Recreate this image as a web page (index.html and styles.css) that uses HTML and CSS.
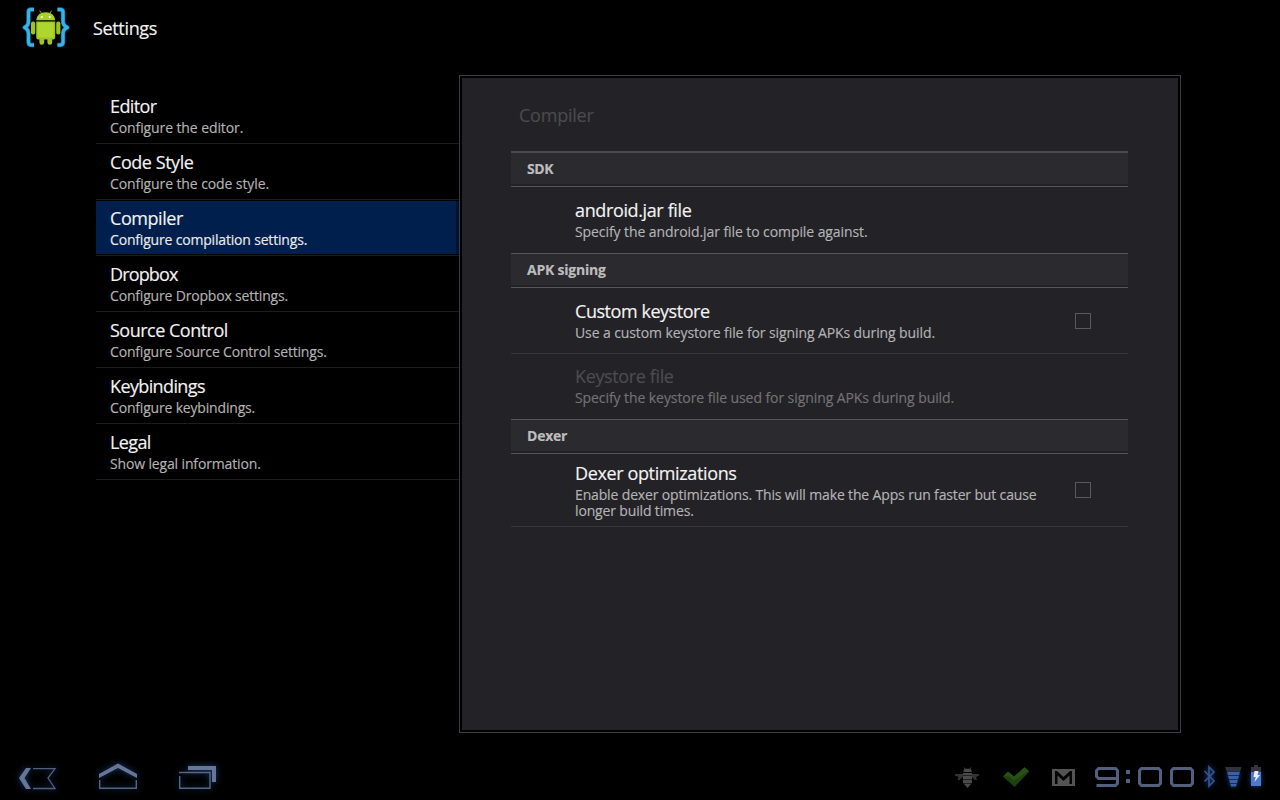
FILE: index.html
```html
<!DOCTYPE html>
<html lang="en">
<head>
<meta charset="utf-8">
<title>Settings</title>
<link rel="stylesheet" href="styles.css">
</head>
<body>
<div class="screen">
  <header class="action-bar">
    <svg class="app-icon" width="50" height="42" viewBox="0 0 50 42">
      <g fill="none" stroke="#1b6f9b" stroke-width="4.4" stroke-linejoin="round">
        <path d="M13 3.500H10Q7.500 3.500 7.500 6V15Q7.500 20 3.500 21.500Q7.500 23 7.500 28V36Q7.500 39 10.500 39H13"/>
        <path d="M36.500 3.500H39Q42 3.500 42 6V15Q42 20 46.500 21.500Q42 23 42 28V36Q42 39 39 39H36.500"/>
      </g>
      <g fill="none" stroke="#33b5ea" stroke-width="3" stroke-linejoin="round">
        <path d="M13 3.500H10Q7.500 3.500 7.500 6V15Q7.500 20 3.500 21.500Q7.500 23 7.500 28V36Q7.500 39 10.500 39H13"/>
        <path d="M36.500 3.500H39Q42 3.500 42 6V15Q42 20 46.500 21.500Q42 23 42 28V36Q42 39 39 39H36.500"/>
      </g>
      <g transform="translate(-.8 0)">
        <path d="M19.500 4.500L22 8.500M31.500 4.500L29 8.500" stroke="#86a51f" stroke-width="1"/>
        <path fill="#a9d02a" d="M16 14.300Q17 6.500 25.500 6.300Q34 6.500 35 14.300Z"/>
        <path fill="#9dc327" d="M16 15.600H35V31.500Q35 33.500 33 33.500H32V36.500Q32 38.800 29.700 38.800Q27.200 38.800 27.200 36.500V33.500H24V36.500Q24 38.800 21.500 38.800Q19.200 38.800 19.200 36.500V33.500H18Q16 33.500 16 31.500Z"/>
        <rect x="10.800" y="15.500" width="4.200" height="13" rx="2" fill="#9dc327"/>
        <rect x="36" y="15.500" width="4.200" height="13" rx="2" fill="#9dc327"/>
        <rect x="17.500" y="16.500" width="16" height="15" fill="#aed62c"/>
        <circle cx="21.600" cy="11" r="1.100" fill="#fff"/><circle cx="29.500" cy="11" r="1.100" fill="#fff"/>
      </g>
    </svg>
    <h1 class="title">Settings</h1>
  </header>

  <main class="content">
    <nav class="headers">
      <a class="header-item"><span class="title tight">Editor</span><span class="summary loose">Configure the editor.</span></a>
      <a class="header-item"><span class="title">Code Style</span><span class="summary loose">Configure the code style.</span></a>
      <a class="header-item selected"><span class="title">Compiler</span><span class="summary">Configure compilation settings.</span></a>
      <a class="header-item"><span class="title tighter">Dropbox</span><span class="summary">Configure Dropbox settings.</span></a>
      <a class="header-item"><span class="title snug">Source Control</span><span class="summary">Configure Source Control settings.</span></a>
      <a class="header-item"><span class="title tight">Keybindings</span><span class="summary">Configure keybindings.</span></a>
      <a class="header-item"><span class="title tight">Legal</span><span class="summary medium">Show legal information.</span></a>
    </nav>

    <section class="panel">
      <div class="panel-body">
        <h2 class="title crumb">Compiler</h2>
        <h3 class="group first">SDK</h3>
        <div class="pref">
          <div class="pref-text"><span class="title wide">android.jar file</span><span class="summary looser">Specify the android.jar file to compile against.</span></div>
        </div>
        <h3 class="group">APK signing</h3>
        <div class="pref ruled">
          <div class="pref-text"><span class="title">Custom keystore</span><span class="summary loose">Use a custom keystore file for signing APKs during build.</span></div>
          <span class="checkbox"></span>
        </div>
        <div class="pref disabled">
          <div class="pref-text"><span class="title wide">Keystore file</span><span class="summary looser">Specify the keystore file used for signing APKs during build.</span></div>
        </div>
        <h3 class="group">Dexer</h3>
        <div class="pref ruled tall">
          <div class="pref-text"><span class="title wide">Dexer optimizations</span><span class="summary medium">Enable dexer optimizations. This will make the Apps run faster but cause longer build times.</span></div>
          <span class="checkbox"></span>
        </div>
      </div>
    </section>
  </main>

  <footer class="system-bar">
    <svg class="nav-keys" width="240" height="46" viewBox="0 0 240 46">
      <g class="key-glow">
        <path fill="#687696" d="M26 14H31L24.500 24L31 35H26L19 24Z"/>
        <path fill="none" stroke="#525f7d" stroke-width="1.300" d="M33 14.600H55L48 24L55 34.500H33"/>
        <path fill="#687696" d="M99 20L118 9.500L137 20V24L118 14L99 24Z"/>
        <path fill="none" stroke="#56637f" stroke-width="1.400" d="M99.700 26V34.300H136.300V26"/>
        <path fill="#687696" d="M188 12H216V28H212V16H188Z"/>
        <path fill="none" stroke="#58667f" stroke-width="1.400" d="M179 18.500H210V34.300H179.700V22"/>
      </g>
    </svg>
    <svg class="status" width="330" height="46" viewBox="950 754 330 46">
      <g fill="#4a4a4a">
        <path d="M963.500 772V770L965 768.800H970L971.500 770V772Z"/>
        <path d="M964 767.500l1.500 2M971 767.500l-1.500 2" stroke="#4a4a4a" stroke-width=".9"/>
        <path fill="#343434" d="M955 774H963V776.500L959.500 780H957.500L958.500 777L955 775.500ZM979 774H971.500V776.500L975 780H977L976 777L979 775.500Z"/>
        <path d="M963 773H972V775H963ZM963 776H972V779H963ZM963 780H972V783H963ZM964 784H971L967.500 788Z"/>
        <path fill="#222" d="M963 775H972V776H963ZM963 779H972V780H963ZM963.500 783H971.500V784H963.500Z"/>
      </g>
      <path fill="#1d400f" d="M1003 776.500L1008 771.500L1014 776.500L1024.500 767.300L1029.300 771.500L1014.500 787Z"/>
      <path fill="#2e5a1d" d="M1003 776.500L1008 771.500L1014 776.500L1024.500 767.300L1029 771L1014 780.500L1008 776Z" opacity=".65"/>
      <rect x="1052" y="769" width="23" height="17" fill="#535353"/>
      <path fill="#050505" d="M1055 784V771H1057L1063.500 777L1070 771H1072V784H1069.500V775.500L1063.500 781L1057.500 775.500V784Z"/>
      <g fill="none" stroke="#535f7e" stroke-width="3">
        <path d="M1117.500 778.500H1098.500L1096.500 776.500V770.500L1098.500 768.500H1115.500L1117.500 770.500V783.500L1115.500 785.500H1096.500"/>
        <path d="M1141.500 768.500H1158.500L1160.500 770.500V783.500L1158.500 785.500H1141.500L1139.500 783.500V770.500Z"/>
        <path d="M1173.500 768.500H1190.500L1192.500 770.500V783.500L1190.500 785.500H1173.500L1171.500 783.500V770.500Z"/>
      </g>
      <path fill="#535f7e" d="M1126 770H1130V774H1126ZM1126 779H1130V783H1126Z"/>
      <g class="blue-glow">
        <path fill="none" stroke="#36558b" stroke-width="1.700" d="M1204.500 771L1214 781L1209 786V767L1214 772L1204.500 781.500"/>
        <path fill="#3c60a5" d="M1227 771.500H1240L1236 786.500H1231Z"/>
        <rect x="1251" y="772" width="10" height="14" fill="#5078c8"/>
      </g>
      <path fill="#30333b" d="M1225 767H1241.500L1240.300 771H1226.300Z"/>
      <path stroke="#182c55" stroke-width="1" d="M1227 771.500H1240M1228 775.500H1239M1229 779.500H1238M1230 783.500H1237"/>
      <path fill="#34363c" d="M1254 765H1258V767H1261V772H1251V767H1254Z"/>
      <path fill="#e8edf8" d="M1254.500 771H1258.500L1257.500 775H1260L1254.500 782L1255.700 777H1253.500Z"/>
    </svg>
  </footer>
</div>
</body>
</html>
```
FILE: styles.css
```css
* { box-sizing: border-box; }

body {
  margin: 0;
  background: #000;
  font-family: "Open Sans", "Noto Sans", sans-serif;
  color: #f3f3f3;
  -webkit-text-stroke: 0.15px;
}

.screen {
  width: 1280px;
  height: 800px;
  display: flex;
  flex-direction: column;
  overflow: hidden;
}

.title {
  display: block;
  margin: 0;
  font-size: 18px;
  line-height: 24px;
  font-weight: 400;
  letter-spacing: -0.45px;
  white-space: nowrap;
}
.title.snug { letter-spacing: -0.5px; }
.title.tight { letter-spacing: -0.62px; }
.title.tighter { letter-spacing: -0.85px; }
.title.wide { letter-spacing: -0.37px; }

.summary {
  display: block;
  margin-top: 2px;
  font-size: 14px;
  line-height: 16px;
  letter-spacing: -0.18px;
  color: #b4b4b4;
}
.summary.loose { letter-spacing: -0.1px; }
.summary.looser { letter-spacing: -0.08px; }
.summary.medium { letter-spacing: -0.147px; }

.action-bar {
  flex: none;
  height: 75px;
  display: flex;
  align-items: flex-start;
  gap: 22px;
  padding: 6px 0 0 21px;
}
.action-bar .title { margin-top: 10px; letter-spacing: -0.34px; }

.content {
  flex: none;
  display: flex;
  height: 658px;
  padding: 0 99px 0 96px;
}

.headers { width: 363px; padding-top: 13px; }
.header-item {
  display: block;
  height: 56px;
  padding: 6px 14px 0;
  border-bottom: 1px solid #1c1c1c;
}
.header-item.selected {
  background: linear-gradient(90deg, #001f4d 360px, #001336 360px) 0 1px / 100% 53px no-repeat;
}
.selected .summary { color: #ececec; }

.panel {
  width: 722px;
  padding: 2px;
  border: 1px solid #3c3c3e;
}
.panel-body {
  height: 652px;
  padding: 25px 50px 0 49px;
  background: #232227;
}
.crumb { padding-left: 8px; height: 48px; color: #4b4b4c; letter-spacing: -0.22px; }

.group {
  height: 35px;
  margin: 0;
  padding: 7px 16px 0;
  border: solid #56565a;
  border-width: 1px 0;
  background: linear-gradient(#2b2a2f, #2b2a2f) 0 0 / 100% 31px no-repeat;
  font-size: 14px;
  line-height: 18px;
  letter-spacing: -0.23px;
  color: #bdbdbd;
}
.group.first {
  height: 36px;
  padding-top: 7px;
  border-top: 2px solid #4b4b4d;
  letter-spacing: -0.45px;
}

.pref {
  display: flex;
  align-items: flex-start;
  justify-content: space-between;
  height: 66px;
  padding: 11px 37px 0 64px;
}
.pref-text { max-width: 466px; }
.pref.ruled { border-bottom: 1px solid #37363b; }
.pref.disabled { height: 65px; padding-top: 10px; }
.pref.tall { height: 73px; padding-top: 7px; }
.disabled .title { color: #4d4d4e; }
.disabled .summary { color: #737375; }

.checkbox {
  width: 16px;
  height: 16px;
  margin-top: 14px;
  border: 1px solid #59595c;
}
.tall .checkbox { margin-top: 21px; }

.system-bar {
  flex: none;
  height: 67px;
  padding-top: 21px;
  display: flex;
  justify-content: space-between;
}
.key-glow { filter: drop-shadow(0 0 3px #1b3f75); }
.blue-glow { filter: drop-shadow(0 0 2.500px #1c4486); }
```
